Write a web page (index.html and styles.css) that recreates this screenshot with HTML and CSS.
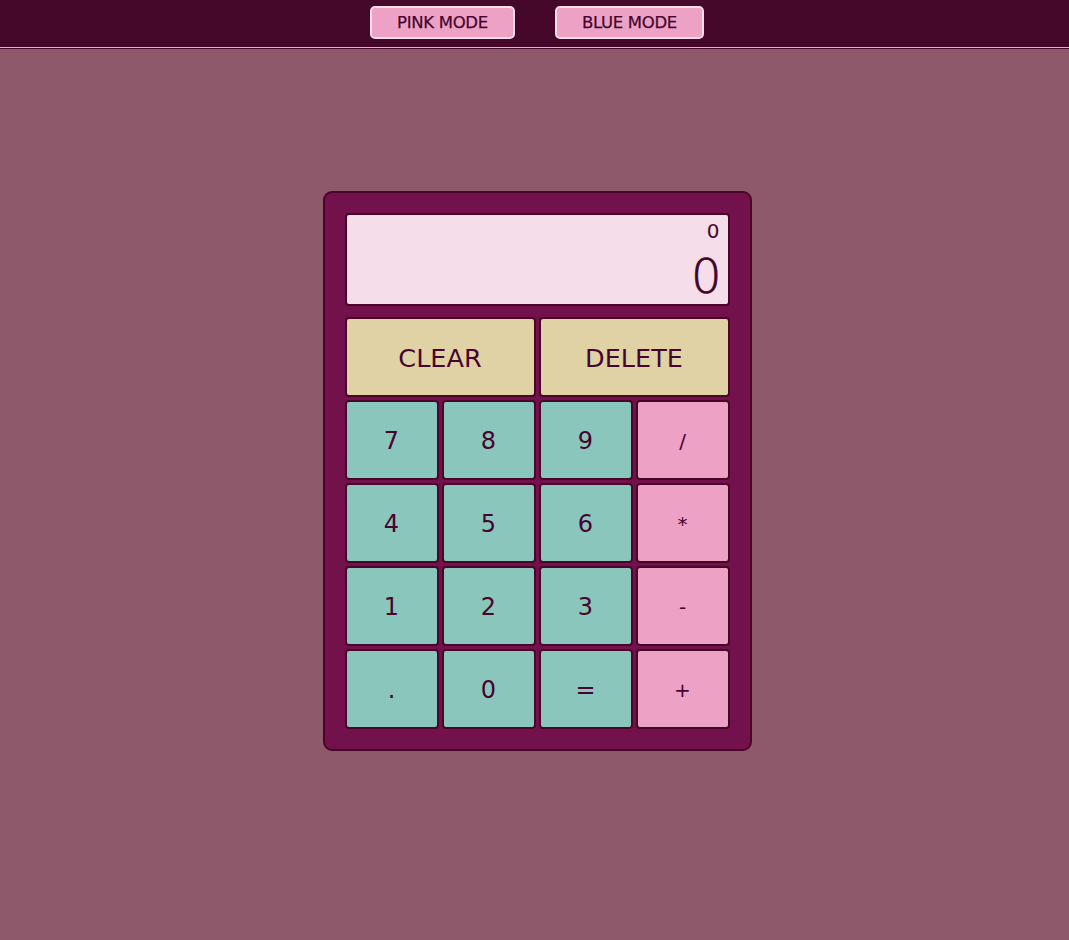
FILE: index.html
```html
<!DOCTYPE html>
<html lang="en">
<head>
<meta charset="utf-8">
<title>Calculator</title>
<link rel="stylesheet" href="styles.css">
</head>
<body>
  <header class="topbar">
    <button class="mode-btn">PINK MODE</button>
    <button class="mode-btn">BLUE MODE</button>
  </header>
  <main class="page">
    <div class="calculator">
      <div class="display">
        <div class="prev">0</div>
        <div class="current">0</div>
      </div>
      <div class="keys">
        <button class="key wide action">CLEAR</button>
        <button class="key wide action">DELETE</button>
        <button class="key num">7</button>
        <button class="key num">8</button>
        <button class="key num">9</button>
        <button class="key op">/</button>
        <button class="key num">4</button>
        <button class="key num">5</button>
        <button class="key num">6</button>
        <button class="key op">*</button>
        <button class="key num">1</button>
        <button class="key num">2</button>
        <button class="key num">3</button>
        <button class="key op">-</button>
        <button class="key num">.</button>
        <button class="key num">0</button>
        <button class="key num">=</button>
        <button class="key op">+</button>
      </div>
    </div>
  </main>
</body>
</html>
```
FILE: styles.css
```css
* { box-sizing: border-box; }

html, body {
  margin: 0;
  padding: 0;
  height: 100%;
}

body {
  background: #8e5a6b;
  font-family: "DejaVu Sans", "Liberation Sans", sans-serif;
  color: #45052e;
}

.topbar {
  height: 48px;
  background: #45072a;
  border-bottom: 1px solid #f0a9c9;
  box-shadow: 0 1px 0 #45072a;
  display: flex;
  justify-content: center;
  align-items: flex-start;
  gap: 40px;
  padding: 6px 0 0 5px;
}

.mode-btn {
  height: 33px;
  padding: 0 25px;
  background: #eda1c4;
  border: 2px solid #f6dbe8;
  border-radius: 5px;
  color: #45052e;
  font-family: inherit;
  font-size: 16.5px;
  letter-spacing: -0.3px;
  -webkit-text-stroke: 0.25px #45052e;
}

.page {
  display: flex;
  justify-content: center;
  padding: 143px 0 0 5px;
}

.calculator {
  width: 429px;
  background: #72114b;
  border: 2px solid #4a0628;
  border-radius: 9px;
  padding: 20px;
}

.display {
  height: 93px;
  background: #f5dde9;
  border: 2px solid #4a0628;
  border-radius: 4px;
  padding: 6px 8px 0 0;
  text-align: right;
  margin-bottom: 11px;
}

.prev {
  font-size: 20px;
  line-height: 20px;
}

.current {
  font-family: "DejaVu Sans", sans-serif;
  font-weight: 200;
  font-size: 48px;
  line-height: 48px;
  margin-top: 11px;
  margin-right: -2px;
  color: #40042a;
  -webkit-text-stroke: 0.7px #40042a;
}

.keys {
  display: grid;
  grid-template-columns: repeat(4, 1fr);
  grid-auto-rows: 80px;
  gap: 3px;
}

.key {
  border: 2px solid #4a0628;
  border-radius: 4px;
  font-family: inherit;
  font-size: 24px;
  color: #45052e;
  padding: 2px 0 0 0;
}

.wide { grid-column: span 2; }

.action { background: #e0d2a5; font-size: 25.5px; }
.num { background: #8bc6bd; }
.op { background: #eda1c4; font-size: 20px; }
```
